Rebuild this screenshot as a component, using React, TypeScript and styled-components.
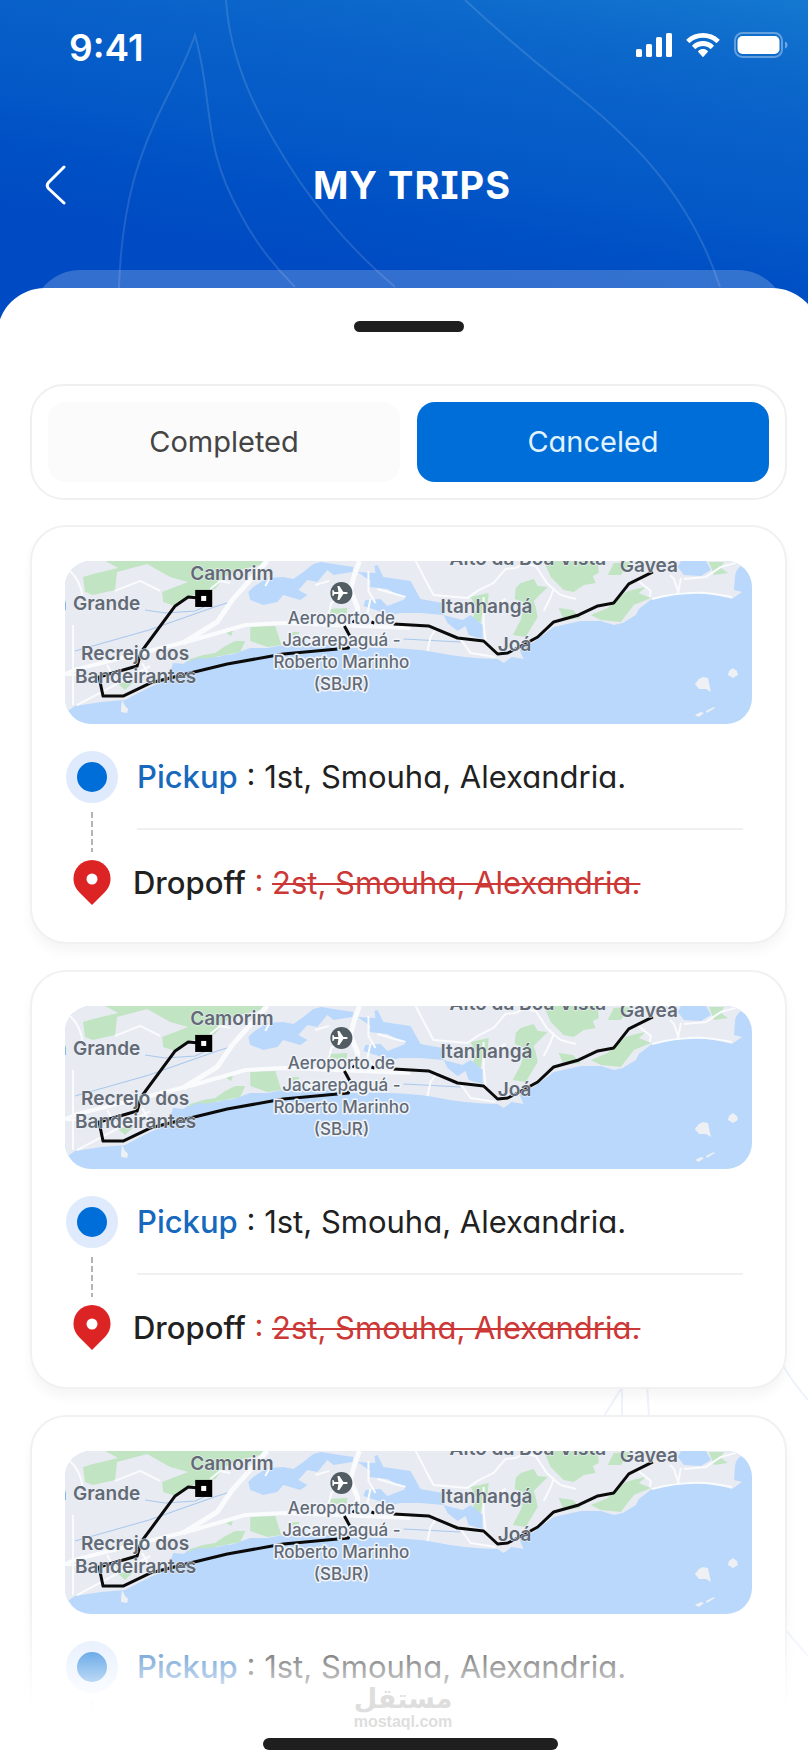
import React, { useState } from "react";
import styled, { createGlobalStyle } from "styled-components";

const GlobalStyle = createGlobalStyle`
  *, *::before, *::after { box-sizing: border-box; }
  html, body { margin: 0; background: #fff; }
  body { font-family: Inter, "Liberation Sans", sans-serif; color: #212121; }
  button { font: inherit; border: 0; padding: 0; cursor: pointer; }
`;

const Screen = styled.div`
  position: relative;
  display: flex;
  flex-direction: column;
  height: 100vh;
  overflow: hidden;
  background: #fff;
`;

const Header = styled.header`
  position: relative;
  flex: none;
  padding: 20px 20px 112px 36px;
  color: #fff;
  background: linear-gradient(
    190deg,
    #1478d0 0,
    #0d69cb 70px,
    #0860c9 140px,
    #0459c7 218px,
    #0050c5 283px,
    #004bc3 340px
  );
`;

const HeaderCurves = styled.svg`
  position: absolute;
  inset: 0;
  width: 100%;
  height: 100%;
  fill: none;
  stroke: rgba(255, 255, 255, 0.13);
  stroke-width: 2;
`;

const StatusBar = styled.div`
  position: relative;
  display: flex;
  align-items: center;
  justify-content: space-between;
  height: 56px;
  padding-left: 33px;
`;

const Clock = styled.time`
  font-size: 37px;
  font-weight: 600;
  line-height: 54px;
`;

const StatusIcons = styled.div`
  display: flex;
  align-items: center;
  gap: 14px;
  height: 50px;
  align-self: flex-start;
`;

const NavBar = styled.nav`
  position: relative;
  display: grid;
  grid-template-columns: 40px 1fr 40px;
  align-items: center;
  height: 60px;
  margin-top: 79px;
  margin-bottom: 1px;
`;

const BackButton = styled.button`
  display: flex;
  width: 40px;
  height: 56px;
  align-items: center;
  color: inherit;
  background: none;
`;

const Title = styled.h1`
  margin: 0;
  font-size: 38px;
  font-weight: 700;
  line-height: 48px;
  text-align: center;
  letter-spacing: 1px;
  font-feature-settings: "cv08";
`;

const PeekSheet = styled.div`
  position: absolute;
  left: 32px;
  right: 22px;
  bottom: 0;
  height: 58px;
  border-radius: 48px 48px 0 0;
  background: rgba(255, 255, 255, 0.2);
`;

const Sheet = styled.main`
  position: relative;
  display: flex;
  flex: 1;
  flex-direction: column;
  min-height: 0;
  margin: -40px -12px 0 -3px;
  padding: 33px 33px 0;
  border-radius: 48px 48px 0 0;
  background: #fff;
`;

const Handle = styled.div`
  flex: none;
  align-self: center;
  width: 110px;
  height: 11px;
  border-radius: 6px;
  background: #1f1f1f;
`;

const SheetLines = styled.svg`
  position: absolute;
  right: 12px;
  bottom: 0;
  width: 240px;
  height: 400px;
  fill: none;
  stroke: #eef2fa;
  stroke-width: 2;
`;

const Tabs = styled.div`
  position: relative;
  display: grid;
  grid-template-columns: 1fr 1fr;
  flex: none;
  gap: 17px;
  margin-top: 52px;
  padding: 16px;
  border: 2px solid #f0f0f0;
  border-radius: 34px;
  background: #fff;
`;

const Tab = styled.button<{ $active: boolean }>`
  height: 80px;
  border-radius: 18px;
  padding-bottom: 2px;
  font-size: 29px;
  font-weight: 400;
  font-feature-settings: "cv11";
  color: ${(p) => (p.$active ? "#e2f3ff" : "#444")};
  background: ${(p) => (p.$active ? "#006ed8" : "#fbfbfb")};
`;

const TripList = styled.ul`
  position: relative;
  display: flex;
  flex: 1;
  flex-direction: column;
  gap: 26px;
  min-height: 0;
  margin: 0 -33px;
  padding: 25px 33px 0;
  list-style: none;
  overflow-y: auto;
  scrollbar-width: none;
`;

const Card = styled.li`
  flex: none;
  padding: 34px 33px 37px;
  border: 2px solid #f1f1f1;
  border-radius: 36px;
  background: #fff;
  box-shadow: 0 8px 12px rgba(0, 0, 0, 0.04);
`;

const MapFrame = styled.svg`
  display: block;
  width: 100%;
  height: 163px;
  border-radius: 26px;
  background: #b9d8fc;
`;

const Route = styled.div`
  display: grid;
  grid-template-columns: 54px 1fr;
  grid-template-rows: 52px 57px 45px;
  column-gap: 14px;
  align-items: center;
  justify-items: center;
  margin-top: 27px;
`;

const PickupDot = styled.span`
  width: 52px;
  height: 52px;
  border: 11px solid #dfebfd;
  border-radius: 50%;
  background: #006ed8;
`;

const Dashes = styled.span`
  width: 2px;
  height: 40px;
  background: repeating-linear-gradient(#b4b4b4 0 6px, transparent 6px 9px);
`;

const Divider = styled.hr`
  justify-self: stretch;
  height: 2px;
  margin: 0 9px 6px 4px;
  border: 0;
  background: #f0f0f0;
`;

const Stop = styled.p<{ $inset?: boolean }>`
  justify-self: start;
  margin: 0;
  padding-left: ${(p) => (p.$inset ? 4 : 0)}px;
  font-size: 31px;
  line-height: 40px;
  white-space: nowrap;
  font-feature-settings: "cv11";
`;

const StopLabel = styled.span<{ $color: string }>`
  font-weight: 500;
  color: ${(p) => p.$color};
`;

const Canceled = styled.span`
  color: #cb3836;
  s { text-decoration-thickness: 2px; }
`;

const Footer = styled.footer`
  position: absolute;
  left: 0;
  right: 0;
  bottom: 0;
  display: flex;
  flex-direction: column;
  align-items: center;
  justify-content: flex-end;
  height: 154px;
  padding: 0 0 14px 12px;
  background: linear-gradient(rgba(255, 255, 255, 0) 0, #fff 98px);
  pointer-events: none;
`;

const Watermark = styled.div`
  display: flex;
  flex-direction: column;
  align-items: center;
  margin-right: 14px;
  margin-bottom: 7px;
  color: #dedede;
  font-weight: 700;
`;

const WatermarkName = styled.span`
  font-family: "DejaVu Sans", sans-serif;
  font-size: 27px;
  line-height: 28px;
`;

const WatermarkUrl = styled.span`
  font-family: "Liberation Sans", sans-serif;
  font-size: 16px;
  line-height: 18px;
`;

const HomeIndicator = styled.div`
  width: 295px;
  height: 12px;
  border-radius: 6px;
  background: #1f1f1f;
`;

function SignalIcon() {
  return (
    <svg width="36" height="24" viewBox="0 0 36 24" fill="#fff" aria-hidden="true">
      <rect x="0" y="16" width="6" height="8" rx="1.6" />
      <rect x="10" y="11" width="6" height="13" rx="1.6" />
      <rect x="20" y="4" width="6" height="20" rx="1.6" />
      <rect x="30" y="0" width="6" height="24" rx="1.6" />
    </svg>
  );
}

function WifiIcon() {
  return (
    <svg width="34" height="24" viewBox="0 0 17.15 12.33" fill="#fff" aria-hidden="true">
      <path d="M8.57 2.47C11.06 2.47 13.45 3.39 15.25 5.04C15.39 5.17 15.61 5.17 15.74 5.04L17.04 3.77C17.1 3.71 17.14 3.62 17.14 3.53C17.14 3.43 17.1 3.35 17.03 3.28C12.3 -1.09 4.84 -1.09 .11 3.28C.04 3.35 0 3.43 0 3.53C0 3.62 .04 3.71 .1 3.77L1.4 5.04C1.54 5.17 1.75 5.17 1.89 5.04C3.69 3.39 6.08 2.47 8.57 2.47Z" />
      <path d="M8.57 6.69C9.93 6.69 11.23 7.2 12.24 8.12C12.38 8.25 12.59 8.25 12.72 8.12L14.01 6.8C14.08 6.73 14.12 6.63 14.11 6.54C14.11 6.44 14.07 6.35 14.01 6.28C10.94 3.39 6.2 3.39 3.13 6.28C3.06 6.35 3.02 6.44 3.02 6.54C3.02 6.63 3.06 6.73 3.13 6.8L4.42 8.12C4.55 8.25 4.76 8.25 4.9 8.12C5.9 7.2 7.21 6.69 8.57 6.69Z" />
      <path d="M11.09 9.48C11.09 9.59 11.06 9.69 10.99 9.76L8.81 12.22C8.75 12.29 8.66 12.33 8.57 12.33C8.48 12.33 8.39 12.29 8.33 12.22L6.15 9.76C6.09 9.69 6.05 9.59 6.05 9.48C6.05 9.37 6.09 9.27 6.16 9.2C7.55 7.89 9.59 7.89 10.98 9.2C11.05 9.27 11.09 9.37 11.09 9.48Z" />
    </svg>
  );
}

function BatteryIcon() {
  return (
    <svg width="54" height="26" viewBox="0 0 54 26" aria-hidden="true">
      <rect x="1" y="1" width="47" height="24" rx="7.5" fill="none" stroke="#fff" strokeOpacity=".35" strokeWidth="2" />
      <rect x="3.5" y="4" width="42" height="18" rx="5" fill="#fff" />
      <path d="M51 9.500c1.600.6 2.500 1.900 2.500 3.500s-.9 2.900-2.500 3.500z" fill="#fff" fillOpacity=".4" />
    </svg>
  );
}

function PinIcon() {
  return (
    <svg width="38" height="45" viewBox="0 0 38 45" aria-hidden="true">
      <path d="M19 0C8.500 0 .5 8.300.5 18.500c0 6 2.300 10.300 6 14L19 45l12.500-12.500c3.700-3.700 6-8 6-14C37.500 8.300 29.500 0 19 0z" fill="#dc2424" />
      <circle cx="19" cy="19" r="5.500" fill="#fff" />
    </svg>
  );
}

const labelProps = {
  fontFamily: 'Inter, "Liberation Sans", sans-serif',
  fill: "#626a76",
  stroke: "#f1f4f9",
  strokeLinejoin: "round" as const,
  paintOrder: "stroke",
};

function TripMap() {
  return (
    <MapFrame viewBox="0 0 686 163" preserveAspectRatio="xMidYMid slice" role="img" aria-label="Trip route map">
      <path
        fill="#e8ebf2"
        d="M0 0H686L678 3Q669 8 669 16L668 29L676 31L666 38L648 33Q620 29 600 34L586 38L573 48L570 54L557 62L548 64L535 60L515 60L488 66L468 81L454 89L458 98L446 96L438 102L432 98Q402 98 368 91Q340 86 283 87L265 84L218 84L202 87L185 87L160 96L140 96L122 100L108 112L104 118L85 126L60 139L36 141L10 145L0 152Z"
      />
      <g fill="#c1e4c3">
        <path d="M40 0L53 7L28 13L18 16L20 31L28 34L50 29L52 11L82 3L105 16L123 21L97 31L98 41L110 45L125 35L150 28L160 15L178 8L195 4L198 0Z" />
        <path d="M185 66L210 65L216 84L202 86L185 80ZM161 72L168 69L166 75ZM263 48L282 47L281 54L265 54ZM52 122L68 121L60 129ZM226 71L234 71L232 77L226 78Z" />
        <path d="M125 98L138 94L150 92L160 85L170 80L180 80L175 91L160 94L145 97L123 101Z" />
        <path d="M405 36L423 32L422 44L417 51L415 62L407 57L411 47ZM450 27L455 22L468 18L472 25L482 26L468 40L470 46L472 56L460 76L447 74L455 59L460 42L449 38Z" />
        <path d="M478 0H532L533 12L527 15L530 22L518 24L508 31L498 29L485 16ZM493 47L507 49L515 57L498 59ZM525 54L542 47L560 31L570 28L580 26L573 32L585 37L568 44L555 61L535 59ZM542 14L548 2L565 1L555 14ZM643 1H658L655 7L662 12L648 14Z" />
      </g>
      <g fill="#b9d8fc">
        <path d="M183 31L188 26L202 17L218 16L228 18L238 11L248 3L256 1L268 3L288 6L287 11L268 14L262 9L252 21L242 19L233 29L242 34L235 39L218 34L212 41L198 44L185 39Z" />
        <path d="M292 11L310 12L309 5L312 4L318 16L345 20L355 38L377 42L378 54L355 52L335 52L325 54L298 45L300 39L315 38L322 45L340 38L322 28L304 26L305 20Z" />
        <path d="M378 54L397 59L405 54L417 64L417 78L403 74L400 65L392 70L382 62ZM612 6L615 0H640L645 9L635 15L618 14Z" />
        <path d="M105 111L108 102L120 103L132 97L146 98L160 94L175 93L180 99L120 113Z" />
      </g>
      <g fill="none" stroke="#a9c8ec" strokeWidth="1">
        <path d="M10 90L84 69L152 45L165 41M80 49L100 52L130 50L145 43M338 78L395 81" />
      </g>
      <g fill="none" stroke="#fafbfd" strokeWidth="2" strokeLinejoin="round">
        <path d="M5 10Q16 20 18 38M50 30L75 20L95 30M8 64V144M0 114H12M12 144L85 105M42 104L52 122M77 102L85 116" />
        <path d="M350 0L360 19L368 34L402 37L412 30L428 22L440 8L450 7L458 3L470 5L481 22L488 28L485 36L478 50" />
        <path d="M418 36V62L420 80M420 50L440 38M485 26L495 34L510 38M570 18L585 30L584 36M604 14L608 18L613 33M615 17L612 33M618 18L640 16L655 6L670 2M372 66L365 76L362 90M395 78L405 92L430 96" />
        <path d="M586 38Q620 29 648 33L666 36M145 28L155 20L165 22M205 16L200 25M305 38L302 52L309 62M280 31L266 42L262 58" />
      </g>
      <path d="M0 113L12 108L128 79L180 64L220 62L345 67" fill="none" stroke="#fafbfd" strokeWidth="4" />
      <path d="M118 82L152 61L167 39L202 0M294 0L289 14L285 29L292 46V62" fill="none" stroke="#fafbfd" strokeWidth="5" />
      <path d="M303 10V30L310 42M312 28L340 36M250 24L264 20" fill="none" stroke="#fafbfd" strokeWidth="2" />
      <g fill="#eef0f3">
        <path d="M57 139L60 145L63 148L62 152L56 151L56 146ZM629 123L633 118L637 116L642 117L645 131L640 128L633 128ZM663 110L667 107L671 110L672 114L667 117L662 114ZM629 154L635 151L638 152L633 156ZM640 150L648 146L649 147L641 152Z" />
      </g>
      <g fill="none" stroke="#0b0b0b" strokeWidth="3" strokeLinejoin="round">
        <path d="M134 37L123 36L110 45L76 91L72 105L34 116L38 135L58 135L85 122L125 112L162 103L218 93L283 87L285 76L279 65M287 60L289 61M306 61L309 62M328 63L363 65L392 77L418 80L432 93L442 92L452 87L472 76L488 61L513 54L532 45L548 42L563 23L587 11" />
      </g>
      <rect x="130" y="29" width="17" height="17" fill="#000" />
      <rect x="136" y="35" width="5" height="5" fill="#fff" />
      <circle cx="276" cy="32" r="11" fill="#525c63" />
      <path d="M269 31h4l-1-6h2l4 6h3q3 1 0 2h-3l-4 6h-2l1-6h-4l-1 2h-1v-6h1z" fill="#fff" />
      <g {...labelProps} fontSize={19} fontWeight={600} strokeWidth={1}>
        <text x="-10" y="49">n</text>
        <text x="8" y="49">Grande</text>
        <text x="125" y="19">Camorim</text>
        <text x="16" y="99">Recrejo dos</text>
        <text x="10" y="122">Bandeirantes</text>
        <text x="375" y="52">Itanhangá</text>
        <text x="432" y="90">Joá</text>
        <text x="554" y="11">Gávea</text>
        <text x="384" y="4">Alto da Boa Vista</text>
      </g>
      <g {...labelProps} fontSize={17} fontWeight={500} strokeWidth={3} textAnchor="middle">
        <text x="276" y="63">Aeroporto de</text>
        <text x="276" y="85">Jacarepaguá -</text>
        <text x="276" y="107">Roberto Marinho</text>
        <text x="276" y="129">(SBJR)</text>
      </g>
    </MapFrame>
  );
}

interface Trip {
  id: number;
  pickup: string;
  dropoff: string;
}

const trips: Trip[] = [1, 2, 3].map((id) => ({
  id,
  pickup: "1st, Smouha, Alexandria.",
  dropoff: "2st, Smouha, Alexandria.",
}));

function TripCard({ trip }: { trip: Trip }) {
  return (
    <Card>
      <TripMap />
      <Route>
        <PickupDot />
        <Stop $inset>
          <StopLabel $color="#1769bd">Pickup</StopLabel> : {trip.pickup}
        </Stop>
        <Dashes />
        <Divider />
        <PinIcon />
        <Stop>
          <StopLabel $color="#212121">Dropoff</StopLabel>{" "}
          <Canceled>
            : <s>{trip.dropoff}</s>
          </Canceled>
        </Stop>
      </Route>
    </Card>
  );
}

const tabNames = ["Completed", "Canceled"];

export default function App() {
  const [active, setActive] = useState("Canceled");
  return (
    <>
      <GlobalStyle />
      <Screen>
        <Header>
          <HeaderCurves viewBox="0 0 808 328" preserveAspectRatio="xMidYMin slice" aria-hidden="true">
            <path d="M119 328V287C122 200 140 150 167 97Q188 56 195 35Q202 60 207 100C212 140 216 170 240 213Q260 252 295 287" />
            <path d="M226 0C230 60 255 115 300 182Q340 240 395 287" />
            <path d="M465 0Q510 42 564 85C630 136 690 195 720 287" />
          </HeaderCurves>
          <StatusBar>
            <Clock>9:41</Clock>
            <StatusIcons>
              <SignalIcon />
              <WifiIcon />
              <BatteryIcon />
            </StatusIcons>
          </StatusBar>
          <NavBar>
            <BackButton aria-label="Back">
              <svg width="40" height="40" viewBox="0 0 40 40" fill="none" stroke="#fff" strokeWidth="3" strokeLinecap="round" strokeLinejoin="round" aria-hidden="true">
                <path d="M28 2L12.500 17.500Q10 20.500 12.500 23.500L28 38" />
              </svg>
            </BackButton>
            <Title>MY TRIPS</Title>
          </NavBar>
          <PeekSheet />
        </Header>
        <Sheet>
          <SheetLines viewBox="0 0 240 400" aria-hidden="true">
            <path d="M36 52L56 20M54 20V52M79 20L81 52M214 0Q226 20 240 36M214 262L240 292" />
          </SheetLines>
          <Handle />
          <Tabs>
            {tabNames.map((name) => (
              <Tab key={name} $active={name === active} aria-pressed={name === active} onClick={() => setActive(name)}>
                {name}
              </Tab>
            ))}
          </Tabs>
          <TripList>
            {trips.map((trip) => (
              <TripCard key={trip.id} trip={trip} />
            ))}
          </TripList>
        </Sheet>
        <Footer>
          <Watermark>
            <WatermarkName lang="ar" dir="rtl">مستقل</WatermarkName>
            <WatermarkUrl>mostaql.com</WatermarkUrl>
          </Watermark>
          <HomeIndicator />
        </Footer>
      </Screen>
    </>
  );
}
